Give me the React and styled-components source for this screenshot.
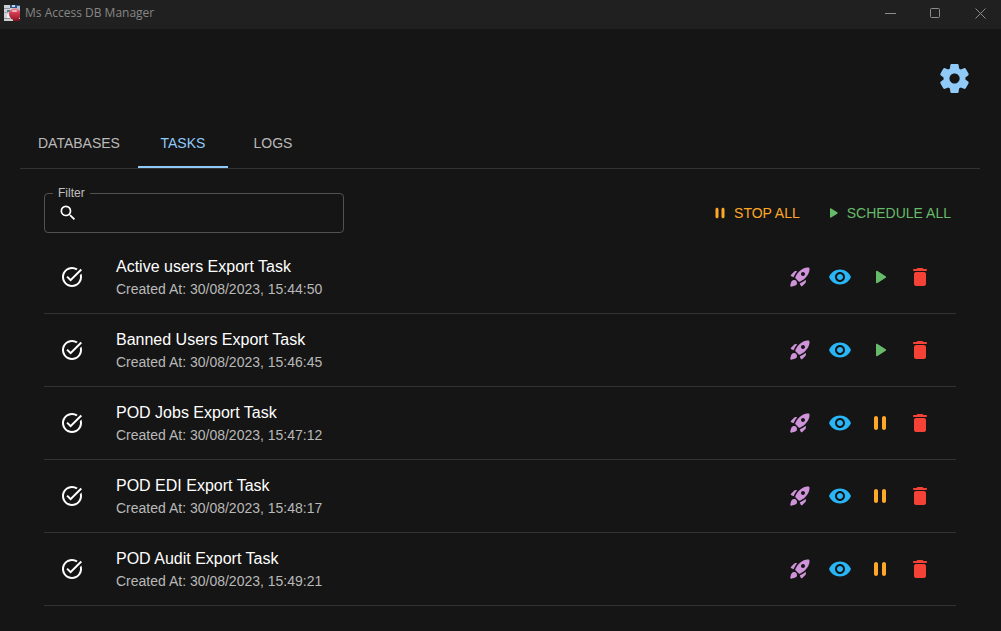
import React, { useState } from "react";
import styled, { createGlobalStyle } from "styled-components";
import { MdTaskAlt, MdVisibility, MdSearch } from "react-icons/md";

const GlobalStyle = createGlobalStyle`
  *, *::before, *::after { box-sizing: border-box; }
  html { color-scheme: dark; }
  body {
    margin: 0;
    background: #151515;
    color: #fff;
    font-family: "Liberation Sans", Arial, sans-serif;
  }
`;

const Window = styled.div`
  display: flex;
  flex-direction: column;
  min-height: 100vh;
`;

const TitleBar = styled.header`
  display: flex;
  align-items: center;
  height: 29px;
  padding: 0 0 3px 4px;
  background: #202020;
  color: #868686;
`;

const AppName = styled.span`
  flex: 1;
  margin-left: 5px;
  font: 12px/16px "Segoe UI", "Open Sans", sans-serif;
`;

const WindowControls = styled.div`
  display: flex;
  gap: 4px;
`;

const WindowButton = styled.button`
  display: flex;
  align-items: center;
  justify-content: center;
  width: 41px;
  height: 26px;
  padding: 0;
  border: 0;
  background: none;
  color: #8c8c8c;
`;

const Page = styled.main`
  flex: 1;
  padding: 24px 21px 24px 20px;
`;

const TopActions = styled.div`
  display: flex;
  justify-content: flex-end;
  margin-bottom: 16px;
`;

const IconButton = styled.button`
  display: flex;
  padding: 8px;
  border: 0;
  border-radius: 50%;
  background: none;
  color: ${({ $color }) => $color};
  cursor: pointer;
`;

const Tabs = styled.div`
  display: flex;
  border-bottom: 1px solid #323232;
`;

const Tab = styled.button`
  min-width: 90px;
  height: 48px;
  padding: 0 18px;
  border: 0;
  border-bottom: 2px solid ${({ $active }) => ($active ? "#90caf9" : "transparent")};
  background: none;
  color: ${({ $active }) => ($active ? "#90caf9" : "#b9b9b9")};
  font: 14px/18px "Liberation Sans", Arial, sans-serif;
  text-transform: uppercase;
  cursor: pointer;
`;

const Panel = styled.section`
  padding: 24px;
`;

const Toolbar = styled.div`
  display: flex;
  align-items: center;
  justify-content: space-between;
  margin-bottom: 8px;
`;

const FilterField = styled.div`
  position: relative;
  display: flex;
  align-items: center;
  width: 300px;
  height: 40px;
  padding: 0 13px;
  border: 1px solid #515151;
  border-radius: 4px;
`;

const FilterLabel = styled.label`
  position: absolute;
  top: -9px;
  left: 8px;
  padding: 0 5px;
  background: #151515;
  color: #c0c0c0;
  font-size: 12px;
  line-height: 16px;
`;

const FilterInput = styled.input`
  flex: 1;
  min-width: 0;
  margin-left: 8px;
  padding: 0;
  border: 0;
  outline: 0;
  background: none;
  color: #fff;
  font: 16px/24px "Liberation Sans", Arial, sans-serif;
`;

const BulkActions = styled.div`
  display: flex;
  gap: 16px;
`;

const TextButton = styled.button`
  display: flex;
  align-items: center;
  gap: 5px;
  padding: 4px 5px 4px 3px;
  border: 0;
  background: none;
  color: ${({ $color }) => $color};
  font: 14px/22px "Liberation Sans", Arial, sans-serif;
  text-transform: uppercase;
  cursor: pointer;
`;

const TaskList = styled.ul`
  margin: 0;
  padding: 0;
  list-style: none;
`;

const TaskRow = styled.li`
  display: flex;
  align-items: center;
  padding: 8px 16px;
  border-bottom: 1px solid #323232;
`;

const TaskText = styled.div`
  flex: 1;
  margin: 6px 0 6px 32px;
`;

const TaskName = styled.div`
  font-size: 16px;
  line-height: 24px;
`;

const TaskDate = styled.div`
  color: #b9b9b9;
  font-size: 14px;
  line-height: 20px;
`;

const Actions = styled.div`
  display: flex;
`;

const paths = {
  settings:
    "M19.5 12c0-.23-.01-.45-.03-.68l1.86-1.41c.4-.3.51-.86.26-1.3l-1.87-3.23c-.25-.44-.79-.62-1.25-.42l-2.15.91c-.37-.26-.76-.49-1.17-.68l-.29-2.31c-.06-.5-.49-.88-.99-.88h-3.73c-.51 0-.94.38-1 .88l-.29 2.31c-.41.19-.8.42-1.17.68l-2.15-.91c-.46-.2-1-.02-1.25.42L2.41 8.62c-.25.44-.14.99.26 1.3l1.86 1.41c-.02.22-.03.44-.03.67s.01.45.03.68l-1.86 1.41c-.4.3-.51.86-.26 1.3l1.87 3.23c.25.44.79.62 1.25.42l2.15-.91c.37.26.76.49 1.17.68l.29 2.31c.06.5.49.88.99.88h3.73c.5 0 .93-.38.99-.88l.29-2.31c.41-.19.8-.42 1.17-.68l2.15.91c.46.2 1 .02 1.25-.42l1.87-3.23c.25-.44.14-.99-.26-1.3l-1.86-1.41c.03-.23.04-.45.04-.68zm-7.46 3.5c-1.93 0-3.5-1.57-3.5-3.5s1.57-3.5 3.5-3.5 3.5 1.57 3.5 3.5-1.57 3.5-3.5 3.5z",
  rocket:
    "M9.19 6.35c-2.04 2.29-3.44 5.58-3.57 5.89l-2.26-.97c-.65-.28-.81-1.13-.31-1.63l3.01-3.01c.47-.47 1.15-.68 1.81-.55l1.32.27zm1.49 10.16c.3.3.74.38 1.12.2 1.16-.54 3.65-1.81 5.26-3.42 4.59-4.59 4.63-8.33 4.36-9.93-.07-.4-.39-.72-.79-.79-1.6-.27-5.34-.23-9.93 4.36-1.61 1.61-2.87 4.1-3.42 5.26-.18.38-.09.83.2 1.12l3.2 3.2zm6.97-1.7c-2.29 2.04-5.58 3.44-5.89 3.57l.97 2.26c.28.65 1.13.81 1.63.31l3.01-3.01c.47-.47.68-1.15.55-1.81l-.27-1.32zm-8.71 2.6c.2 1.06-.15 2.04-.82 2.71-.77.77-3.16 1.34-4.71 1.64-.69.13-1.3-.48-1.17-1.17.3-1.55.86-3.94 1.64-4.71.67-.67 1.65-1.02 2.71-.82 1.17.22 2.13 1.18 2.35 2.35zM13 9c0-1.1.9-2 2-2s2 .9 2 2-.9 2-2 2-2-.9-2-2z",
  play: "M8 6.82v10.36c0 .79.87 1.27 1.54.84l8.14-5.18c.62-.39.62-1.29 0-1.69L9.54 5.98C8.87 5.55 8 6.03 8 6.82z",
  pause:
    "M8 19c1.1 0 2-.9 2-2V7c0-1.1-.9-2-2-2s-2 .9-2 2v10c0 1.1.9 2 2 2zm6-12v10c0 1.1.9 2 2 2s2-.9 2-2V7c0-1.1-.9-2-2-2s-2 .9-2 2z",
  trash:
    "M6 19c0 1.1.9 2 2 2h8c1.1 0 2-.9 2-2V9c0-1.1-.9-2-2-2H8c-1.1 0-2 .9-2 2v10zM18 4h-2.5l-.71-.71c-.18-.18-.44-.29-.7-.29H9.91c-.26 0-.52.11-.7.29L8.5 4H6c-.55 0-1 .45-1 1s.45 1 1 1h12c.55 0 1-.45 1-1s-.45-1-1-1z",
};

function Icon({ name, size = 24 }) {
  return (
    <svg width={size} height={size} viewBox="0 0 24 24" fill="currentColor" aria-hidden="true">
      <path d={paths[name]} />
    </svg>
  );
}

function AppLogo() {
  return (
    <svg width="16" height="16" viewBox="0 0 16 16" aria-hidden="true">
      <defs>
        <linearGradient id="ball" x1="0" y1="0" x2="0" y2="1">
          <stop offset="0" stopColor="#e39aa5" />
          <stop offset="0.4" stopColor="#d23b50" />
          <stop offset="1" stopColor="#98182b" />
        </linearGradient>
      </defs>
      <rect width="16" height="16" fill="#cfd2d4" />
      <rect x="6" width="10" height="3" fill="#2d568c" />
      <rect x="8" width="3" height="2" fill="#c4d3e2" />
      <rect x="13" y="1" width="3" height="3" fill="#a9bfd4" />
      <rect y="3" width="6" height="1" fill="#8f979d" />
      <rect y="7" width="4" height="1" fill="#a3a7aa" />
      <rect x="3" y="5" width="3" height="2" fill="#51788c" />
      <rect y="13" width="6" height="1" fill="#8c8f90" />
      <rect x="3" y="9" width="3" height="4" fill="#f0f0f0" />
      <rect x="9" y="14" width="7" height="2" fill="#7d1524" />
      <ellipse cx="11" cy="9" rx="6" ry="6" fill="url(#ball)" />
      <rect x="8" y="5" width="5" height="2" rx="1" fill="#eeb4bc" />
    </svg>
  );
}

const tabs = ["Databases", "Tasks", "Logs"];

const initialTasks = [
  { name: "Active users Export Task", created: "30/08/2023, 15:44:50", running: false },
  { name: "Banned Users Export Task", created: "30/08/2023, 15:46:45", running: false },
  { name: "POD Jobs Export Task", created: "30/08/2023, 15:47:12", running: true },
  { name: "POD EDI Export Task", created: "30/08/2023, 15:48:17", running: true },
  { name: "POD Audit Export Task", created: "30/08/2023, 15:49:21", running: true },
];

export default function App() {
  const [active, setActive] = useState("Tasks");
  const [filter, setFilter] = useState("");
  const [tasks, setTasks] = useState(initialTasks);

  const setAll = (running) => setTasks(tasks.map((t) => ({ ...t, running })));
  const toggle = (task) =>
    setTasks(tasks.map((t) => (t === task ? { ...t, running: !t.running } : t)));
  const visible = tasks.filter((t) => t.name.toLowerCase().includes(filter.toLowerCase()));

  return (
    <Window>
      <GlobalStyle />
      <TitleBar>
        <AppLogo />
        <AppName>Ms Access DB Manager</AppName>
        <WindowControls>
          <WindowButton aria-label="Minimize">
            <svg width="11" height="11" stroke="currentColor" fill="none">
              <path d="M0 5.500H11" />
            </svg>
          </WindowButton>
          <WindowButton aria-label="Maximize">
            <svg width="11" height="11" stroke="currentColor" fill="none">
              <rect x="0.5" y="0.5" width="9" height="9" rx="1" />
            </svg>
          </WindowButton>
          <WindowButton aria-label="Close">
            <svg width="11" height="11" stroke="currentColor" fill="none">
              <path d="M0.500 0.500L10.500 10.500M10.500 0.500L0.500 10.500" />
            </svg>
          </WindowButton>
        </WindowControls>
      </TitleBar>
      <Page>
        <TopActions>
          <IconButton $color="#90caf9" aria-label="Settings">
            <Icon name="settings" size={35} />
          </IconButton>
        </TopActions>
        <Tabs role="tablist">
          {tabs.map((tab) => (
            <Tab
              key={tab}
              role="tab"
              aria-selected={tab === active}
              $active={tab === active}
              onClick={() => setActive(tab)}
            >
              {tab}
            </Tab>
          ))}
        </Tabs>
        <Panel role="tabpanel">
          <Toolbar>
            <FilterField>
              <FilterLabel htmlFor="filter">Filter</FilterLabel>
              <MdSearch size={20} aria-hidden="true" />
              <FilterInput
                id="filter"
                type="text"
                value={filter}
                onChange={(e) => setFilter(e.target.value)}
              />
            </FilterField>
            <BulkActions>
              <TextButton $color="#ffa726" onClick={() => setAll(false)}>
                <Icon name="pause" size={18} />
                Stop all
              </TextButton>
              <TextButton $color="#66bb6a" onClick={() => setAll(true)}>
                <Icon name="play" size={18} />
                Schedule all
              </TextButton>
            </BulkActions>
          </Toolbar>
          <TaskList>
            {visible.map((task) => (
              <TaskRow key={task.name}>
                <MdTaskAlt size={24} aria-hidden="true" />
                <TaskText>
                  <TaskName>{task.name}</TaskName>
                  <TaskDate>Created At: {task.created}</TaskDate>
                </TaskText>
                <Actions>
                  <IconButton $color="#ce93d8" aria-label="Run now">
                    <Icon name="rocket" />
                  </IconButton>
                  <IconButton $color="#29b6f6" aria-label="View">
                    <MdVisibility size={24} />
                  </IconButton>
                  <IconButton
                    $color={task.running ? "#ffa726" : "#66bb6a"}
                    aria-label={task.running ? "Stop" : "Schedule"}
                    onClick={() => toggle(task)}
                  >
                    <Icon name={task.running ? "pause" : "play"} />
                  </IconButton>
                  <IconButton
                    $color="#f44336"
                    aria-label="Delete"
                    onClick={() => setTasks(tasks.filter((t) => t !== task))}
                  >
                    <Icon name="trash" />
                  </IconButton>
                </Actions>
              </TaskRow>
            ))}
          </TaskList>
        </Panel>
      </Page>
    </Window>
  );
}
